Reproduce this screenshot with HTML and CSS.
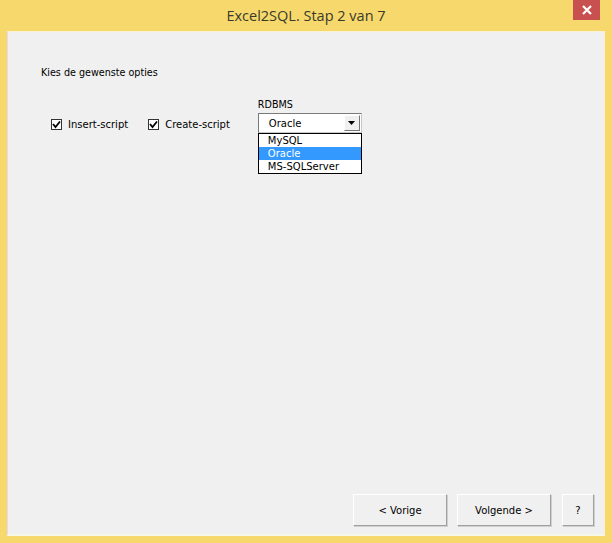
FILE: index.html
```html
<!DOCTYPE html>
<html>
<head>
<meta charset="utf-8">
<link rel="stylesheet" href="styles.css">
</head>
<body>
<div class="window">
  <div class="titlebar">
    <div class="title">Excel2SQL. Stap 2 van 7</div>
    <div class="close"><svg width="12" height="10" viewBox="0 0 12 10"><path d="M2 1 L10 9 M10 1 L2 9" stroke="#fff" stroke-width="2.2"/></svg></div>
  </div>
  <div class="client">
    <div class="intro">Kies de gewenste opties</div>
    <div class="options">
      <label class="check"><span class="box"><svg width="9" height="9" viewBox="0 0 9 9"><path d="M1 4 L3.5 7 L8 1.5" stroke="#000" stroke-width="1.8" fill="none"/></svg></span>Insert-script</label>
      <label class="check second"><span class="box"><svg width="9" height="9" viewBox="0 0 9 9"><path d="M1 4 L3.5 7 L8 1.5" stroke="#000" stroke-width="1.8" fill="none"/></svg></span>Create-script</label>
      <div class="rdbms">
        <div class="rlabel">RDBMS</div>
        <div class="combo">
          <span class="value">Oracle</span>
          <span class="arrow"><svg width="7" height="4" viewBox="0 0 7 4"><path d="M0 0 H7 L3.5 4 Z" fill="#000"/></svg></span>
        </div>
        <div class="list">
          <div class="item">MySQL</div>
          <div class="item sel">Oracle</div>
          <div class="item">MS-SQLServer</div>
        </div>
      </div>
    </div>
    <div class="spacer"></div>
    <div class="buttons">
      <div class="btn b1">&lt; Vorige</div>
      <div class="btn b2">Volgende &gt;</div>
      <div class="btn b3">?</div>
    </div>
  </div>
</div>
</body>
</html>
```

FILE: styles.css
```css
html, body { margin: 0; padding: 0; }
body { width: 612px; height: 543px; overflow: hidden; font-family: "DejaVu Sans", Tahoma, sans-serif; }
.window {
  width: 612px; height: 543px; box-sizing: border-box;
  background: #f6d86c;
  padding: 0 7px 7px 7px;
  display: flex; flex-direction: column;
}
.titlebar {
  height: 30px; position: relative;
  display: flex; align-items: center; justify-content: center;
}
.title {
  font-family: "Open Sans", "Segoe UI", sans-serif;
  font-size: 14.5px; color: #3a3a2a; padding-top: 1px;
}
.close {
  position: absolute; right: 5px; top: 0;
  width: 27px; height: 20px; background: #c8504f;
  display: flex; align-items: center; justify-content: center;
}
.client {
  flex: 1;
  margin-top: 1px;
  background: #f0f0f0;
  border-left: 1px solid #e6d7f2;
  border-top: 1px solid #fbf3cf;
  border-right: 1px solid #fbf3cf;
  border-bottom: 2px solid #f3f8e8;
  display: flex; flex-direction: column;
}
.intro {
  font-size: 9.6px; color: #000;
  margin: 35px 0 0 33px;
}
.options {
  display: flex; align-items: flex-start;
  margin: 21px 0 0 43px;
}
.check {
  display: flex; align-items: center;
  font-size: 10px; color: #000;
  margin-top: 20px;
}
.check.second { margin-left: 20px; }
.box {
  width: 9px; height: 9px;
  border: 1px solid #333;
  background: #fff;
  margin-right: 6px;
  display: flex; align-items: center; justify-content: center;
}
.rdbms { margin-left: 28px; width: 104px; }
.rlabel { font-size: 9.6px; color: #000; height: 13px; line-height: 12px; }
.combo {
  margin-top: 1px;
  height: 20px; box-sizing: border-box;
  border: 1px solid #7a7a7a;
  border-right-color: #c8c8c8; border-bottom-color: #c8c8c8;
  background: #fff;
  display: flex; align-items: center;
  font-size: 10px;
  position: relative;
}
.value { padding-left: 10px; flex: 1; }
.arrow {
  width: 16px; height: 16px; margin-right: 1px;
  background: #f0f0f0;
  border: 1px solid #fff; border-right-color: #777; border-bottom-color: #777;
  display: flex; align-items: center; justify-content: center;
  box-sizing: border-box;
}
.list {
  border: 1px solid #000;
  background: #fff;
  font-size: 10px;
  padding: 0;
}
.item { height: 13px; line-height: 13px; padding-left: 9px; }
.item.sel { background: #3399ff; color: #fff; }
.spacer { flex: 1; }
.buttons {
  display: flex; justify-content: flex-end;
  margin: 0 10px 8px 0;
}
.btn {
  height: 32px; box-sizing: border-box;
  border: 1px solid #fff;
  border-right-color: #a0a0a0; border-bottom-color: #a0a0a0;
  box-shadow: 1px 1px 0 #d0d0d0;
  background: #f0f0f0;
  display: flex; align-items: center; justify-content: center;
  font-size: 10px; color: #000;
}
.b1 { width: 94px; }
.b2 { width: 94px; margin-left: 10px; }
.b3 { width: 32px; margin-left: 11px; }
```
